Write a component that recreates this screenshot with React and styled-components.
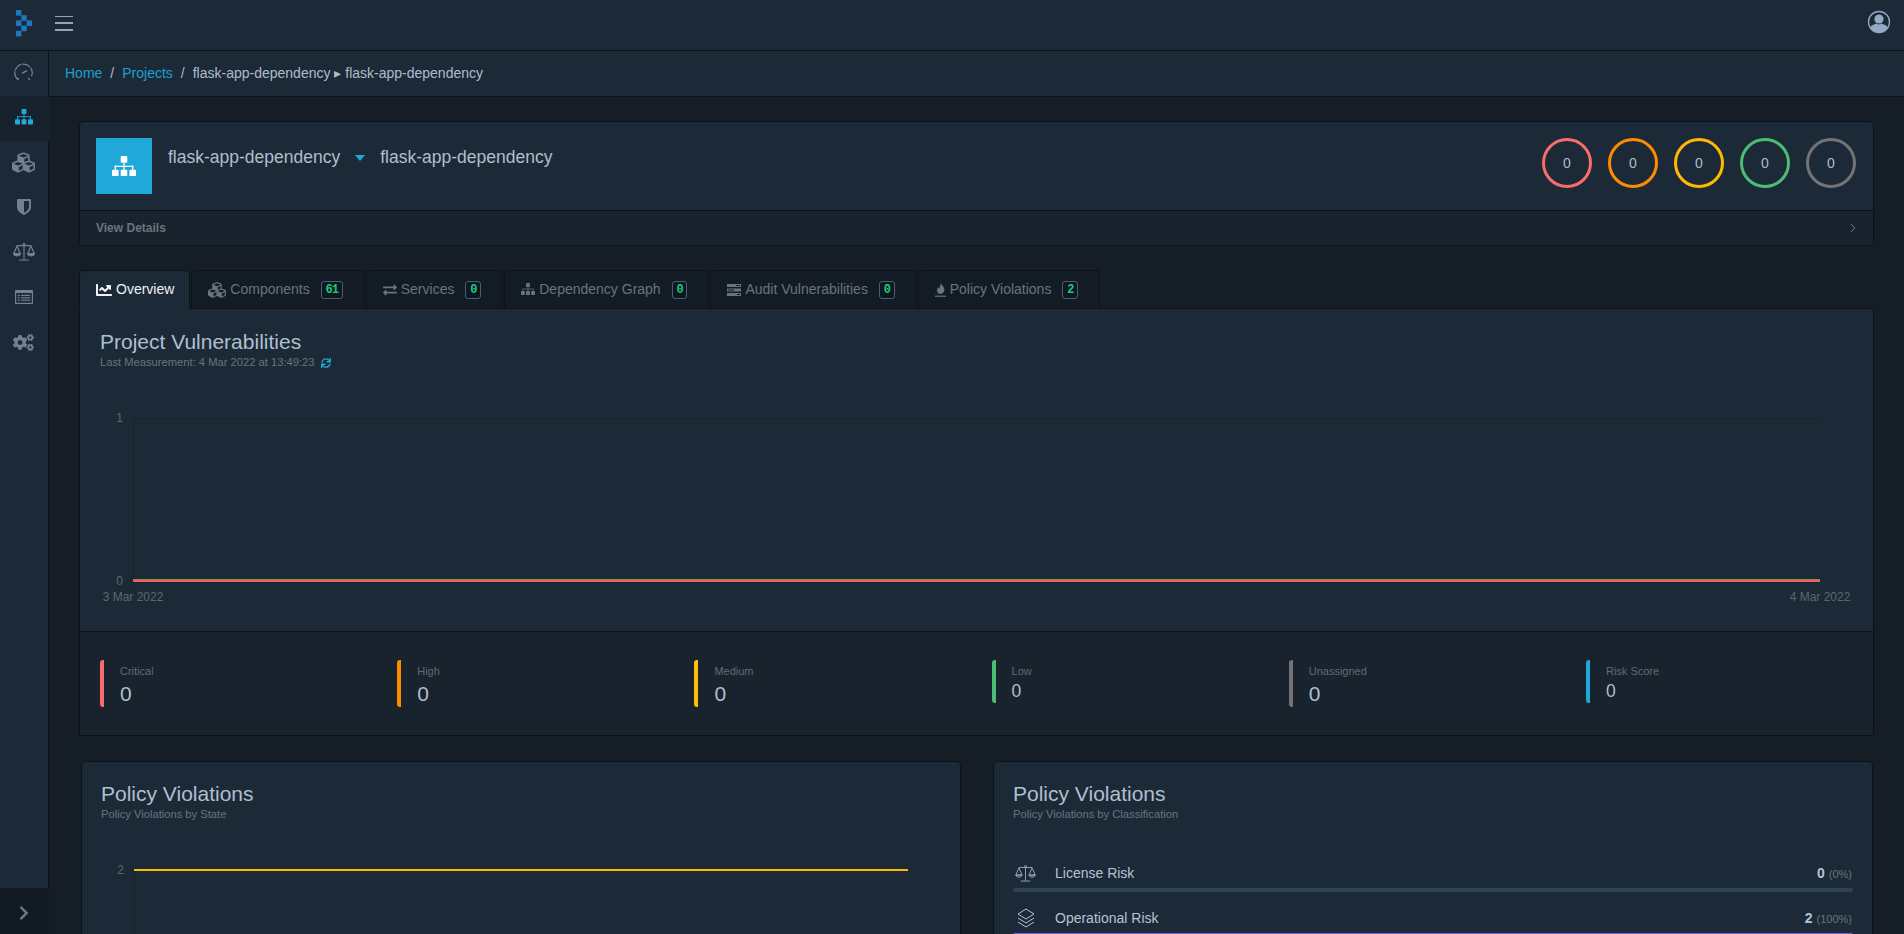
import React from 'react';
import styled, { createGlobalStyle } from 'styled-components';
import {
  FaCubes, FaCogs, FaChartLine, FaExchangeAlt, FaSync, FaChevronRight,
} from 'react-icons/fa';
import { ChevronRight } from 'lucide-react';

const GlobalStyle = createGlobalStyle`
html, body {
  margin: 0;
  height: 100%;
  overflow: hidden;
  background: #151e27;
  color: #b0bfce;
  font-family: "Liberation Sans", Arial, sans-serif;
  font-size: 14px;
  line-height: 1.5;
}
* {
  box-sizing: border-box;
}
`;

const Page = styled.div`
display: flex;
flex-direction: column;
height: 100vh;
overflow: hidden;
`;
const Header = styled.header`
flex: 0 0 51px;
display: flex;
align-items: center;
justify-content: space-between;
background: #1c2a37;
border-bottom: 1px solid #0c1218;
padding: 0 13px 4px 16px;
`;
const HeaderLeft = styled.div`
display: flex;
align-items: center;
gap: 23px;
`;
const Burger = styled.div`
width: 18px;
height: 15px;
display: flex;
flex-direction: column;
justify-content: space-between;
& > span {
  display: block;
  height: 1.5px;
  background: #93a5b8;
}
`;
const AvatarBox = styled.div`
display: flex;
margin-bottom: 2px;
`;
const Body = styled.div`
flex: 1;
display: flex;
min-height: 0;
`;
const Sidebar = styled.nav`
flex: 0 0 49px;
display: flex;
flex-direction: column;
`;
const SideList = styled.div`
flex: 1;
background: #1c2a37;
border-right: 1px solid #0c1218;
`;
const SideItem = styled.div`
height: 45px;
display: flex;
align-items: center;
justify-content: center;
padding: 0 1px 3px 0;
color: ${p => (p.$active ? '#20a8d8' : '#73818f')};
background: ${p => (p.$active ? '#18222d' : 'transparent')};
margin-right: ${p => (p.$active ? '-1px' : '0')};
`;
const Minimizer = styled.div`
flex: 0 0 46px;
display: flex;
align-items: center;
justify-content: center;
padding: 4px 2px 0 0;
color: #6a7681;
background: #121a22;
`;
const Main = styled.main`
flex: 1;
min-width: 0;
display: flex;
flex-direction: column;
`;
const Breadcrumb = styled.ol`
flex: 0 0 46px;
margin: 0;
padding: 0 16px;
list-style: none;
display: flex;
align-items: center;
gap: 8px;
background: #1c2a37;
border-bottom: 1px solid #0c1218;
`;
const Crumb = styled.li`
color: #aebccb;
`;
const CrumbLink = styled.li`
color: #1f9ed0;
`;
const Content = styled.div`
flex: 1;
min-height: 0;
overflow: hidden;
padding: 24px 30px 0;
`;
const ProjectCard = styled.section`
border: 1px solid #0c1218;
border-radius: 4px;
background: #1c2a37;
`;
const ProjectTop = styled.div`
height: 88px;
padding: 16px;
display: flex;
justify-content: space-between;
`;
const ProjectIdent = styled.div`
display: flex;
gap: 16px;
`;
const ProjectIcon = styled.div`
width: 56px;
height: 56px;
display: flex;
align-items: center;
justify-content: center;
color: #fff;
background: #20a8d8;
`;
const ProjectName = styled.div`
display: flex;
align-items: center;
height: 38px;
font-size: 17.5px;
color: #b0bfce;
`;
const Caret = styled.span`
margin: 2px 15px 0 15px;
width: 0;
height: 0;
border-left: 5.5px solid transparent;
border-right: 5.5px solid transparent;
border-top: 6px solid #20a8d8;
`;
const Rings = styled.div`
display: flex;
gap: 16px;
padding-right: 1px;
`;
const Ring = styled.div`
width: 50px;
height: 50px;
border-radius: 50%;
border: 3px solid ${p => p.$color};
display: flex;
align-items: center;
justify-content: center;
color: #aebccb;
`;
const ProjectFoot = styled.div`
height: 35px;
padding: 0 13px 0 16px;
display: flex;
align-items: center;
justify-content: space-between;
font-size: 12px;
font-weight: 700;
color: #68747f;
background: #18232e;
border-top: 1px solid #0c1218;
border-radius: 0 0 4px 4px;
`;
const FootChevron = styled.span`
display: flex;
color: #84909c;
`;
const Tabs = styled.div`
display: flex;
gap: 1px;
margin-top: 24px;
margin-bottom: -1px;
position: relative;
`;
const Tab = styled.div`
height: 39px;
padding: 0 ${p => (p.$badge ? '21px' : '15px')} 0 16px;
display: flex;
align-items: center;
gap: 4px;
border: 1px solid #0c1218;
border-bottom-color: ${p => (p.$active ? '#1c2a37' : '#0c1218')};
border-radius: 4px 4px 0 0;
background: ${p => (p.$active ? '#1c2a37' : '#131c25')};
color: ${p => (p.$active ? '#eef3f8' : '#68747f')};
`;
const Badge = styled.span`
height: 18px;
margin-left: 7px;
padding: 0 3.8px;
display: flex;
align-items: center;
justify-content: center;
font-family: "Liberation Mono", monospace;
font-size: 12px;
letter-spacing: -1px;
font-weight: 700;
color: #1fc878;
background: #0e1820;
border: 1px solid #4c5e70;
border-radius: 3px;
`;
const Panel = styled.section`
border: 1px solid #0c1218;
background: #1c2a37;
`;
const PanelHead = styled.div`
padding: 20px 20px 0;
`;
const Title = styled.h4`
margin: 0;
font-size: 21px;
font-weight: 400;
line-height: 25px;
color: #aebfd0;
`;
const Sub = styled.div`
display: flex;
align-items: center;
gap: 6px;
margin-top: 2px;
font-size: 11.2px;
line-height: 13px;
color: #68747f;
`;
const Refresh = styled.span`
display: flex;
color: #20a8d8;
`;
const Chart = styled.svg`
display: block;
`;
const AxisText = styled.text`
font-size: 12px;
fill: #5d6670;
`;
const Stats = styled.div`
height: 104px;
padding: 28px 0 0 20px;
display: grid;
grid-template-columns: repeat(6, 297.2px);
background: #18232e;
border-top: 1px solid #0c1218;
overflow: hidden;
`;
const Stat = styled.div`
height: ${p => (p.$small ? '43px' : '47px')};
padding-left: 16px;
border-left: 4px solid ${p => p.$color};
border-radius: 3px 0 0 3px;
`;
const StatLabel = styled.div`
margin-top: 4px;
font-size: 11px;
line-height: 14px;
color: #5f6b77;
`;
const StatValue = styled.div`
margin-top: 3px;
font-size: ${p => (p.$small ? '17.5px' : '21px')};
line-height: ${p => (p.$small ? '21px' : '25px')};
color: #aebfd0;
`;
const Cards = styled.div`
display: grid;
grid-template-columns: 880px 880px;
gap: 32px;
margin-top: 25px;
padding-left: 2px;
`;
const Card = styled.section`
height: 400px;
padding: 19px 19px 0;
border: 1px solid #0c1218;
border-radius: 4px;
background: #1c2a37;
`;
const RiskList = styled.div`
display: flex;
flex-direction: column;
margin-top: 37px;
`;
const Risk = styled.div`
height: 45px;
`;
const RiskHead = styled.div`
height: 30px;
padding-right: 1px;
display: flex;
align-items: center;
justify-content: space-between;
`;
const RiskName = styled.div`
display: flex;
align-items: center;
gap: 17px;
color: #b4c4d4;
`;
const RiskIconBox = styled.span`
width: 25px;
display: flex;
justify-content: center;
color: #b4c4d4;
`;
const RiskCount = styled.div`
font-weight: 700;
color: #b4c4d4;
`;
const RiskPct = styled.small`
font-size: 11px;
font-weight: 400;
color: #68747f;
margin-left: 4px;
`;
const Progress = styled.div`
height: 4px;
border-radius: 2px;
background: #2f4358;
`;
const ProgressBar = styled.div`
height: 100%;
border-radius: 2px;
background: #6f5fdc;
`;

function Logo() {
  const squares = [[0, 0], [1, 1], [0, 2], [2, 2], [1, 3], [0, 4]];
  return (
    <svg width="16" height="27" viewBox="0 0 16 27" fill="#1e78c0">
      {squares.map(([c, r]) => (
        <rect key={`${c}-${r}`} x={c * 5.33} y={r * 5.2} width="5.4" height="5.6" />
      ))}
    </svg>
  );
}

function Avatar() {
  return (
    <svg width="24" height="24" viewBox="0 0 24 24">
      <circle cx="12" cy="12" r="10.5" fill="none" stroke="#93aac2" strokeWidth="1.3" />
      <circle cx="12" cy="9" r="4.6" fill="#93aac2" />
      <path d="M3.2 17.5 C4.5 14.6 8 14.2 9.5 13.4 C11 14.6 13 14.6 14.5 13.4 C16 14.2 19.5 14.6 20.8 17.5 C18.5 21 15.5 22.4 12 22.4 C8.5 22.4 5.5 21 3.2 17.5Z" fill="#93aac2" />
    </svg>
  );
}

// the sitemap in the old font-awesome proportions, taller than the one in react-icons
function Sitemap({ width }) {
  return (
    <svg width={width} height={width * 0.86} viewBox="0 0 24 20.6" fill="currentColor">
      <rect x="8.7" y="0" width="6.6" height="6.8" rx="1" />
      <rect x="0" y="13.8" width="6.6" height="6.8" rx="1" />
      <rect x="8.7" y="13.8" width="6.6" height="6.8" rx="1" />
      <rect x="17.4" y="13.8" width="6.6" height="6.8" rx="1" />
      <rect x="11.4" y="6.5" width="1.2" height="7.5" />
      <rect x="2.7" y="9.7" width="18.6" height="1.2" />
      <rect x="2.7" y="9.7" width="1.2" height="4.3" />
      <rect x="20.1" y="9.7" width="1.2" height="4.3" />
    </svg>
  );
}

function Speedometer() {
  return (
    <svg width="19" height="18" viewBox="0 0 19 18" fill="none" stroke="currentColor" strokeWidth="1.2">
      <path d="M4 16.5 A8.7 8.7 0 1 1 15 16.5" strokeDasharray="9 .8 9 .8 9 .8 9" />
      <path d="M8 10.4 L13 7.6" strokeWidth="1.6" />
      <path d="M3 16.8 L5 15.2 M16 16.8 L14 15.2" />
    </svg>
  );
}

function Shield() {
  return (
    <svg width="14" height="16" viewBox="0 0 14 16" fill="currentColor" fillRule="evenodd">
      <path d="M0 1 Q0 0 1 0 H13 Q14 0 14 1 V8 C14 12 10 14.5 7 16 C4 14.5 0 12 0 8Z M7 2 V13.8 C9.5 12.4 12 10.6 12 8 V2Z" />
    </svg>
  );
}

function Scales({ width = 22, height = 18, weight = 1.2 }) {
  return (
    <svg width={width} height={height} viewBox="0 0 22 18" fill="none" stroke="currentColor" strokeWidth={weight}>
      <circle cx="11" cy="1.6" r="1" />
      <path d="M11 2.5 V16.5 M6 17 H16 M4 2.6 H18" />
      <path d="M4 3 L0.8 10.5 H7.2Z M18 3 L14.8 10.5 H21.2Z" />
      <path d="M0.6 10.8 C1.5 13.6 6.5 13.6 7.4 10.8Z M14.6 10.8 C15.5 13.6 20.5 13.6 21.4 10.8Z" fill={weight > 1 ? 'currentColor' : 'none'} />
    </svg>
  );
}

function ListAlt() {
  return (
    <svg width="18" height="14" viewBox="0 0 18 14" fill="currentColor" fillRule="evenodd">
      <path d="M1 0 H17 Q18 0 18 1 V13 Q18 14 17 14 H1 Q0 14 0 13 V1 Q0 0 1 0Z M1.2 3 V12.8 H16.8 V3Z" />
      <rect x="2.8" y="4.8" width="2" height="1.2" />
      <rect x="2.8" y="7.2" width="2" height="1.2" />
      <rect x="2.8" y="9.6" width="2" height="1.2" />
      <rect x="6" y="4.8" width="9.2" height="1.2" />
      <rect x="6" y="7.2" width="9.2" height="1.2" />
      <rect x="6" y="9.6" width="9.2" height="1.2" />
    </svg>
  );
}

function Tasks() {
  return (
    <svg width="14" height="12" viewBox="0 0 14 12" fill="currentColor">
      <rect y="0" width="14" height="3" />
      <rect y="4.5" width="14" height="3" />
      <rect y="9" width="14" height="3" />
      <rect x="9" y="1" width="4" height="1" fill="#131c25" />
      <rect x="1" y="5.5" width="6" height="1" fill="#131c25" />
      <rect x="10" y="10" width="3" height="1" fill="#131c25" />
    </svg>
  );
}

function Flame() {
  return (
    <svg width="11" height="14" viewBox="0 0 11 14" fill="currentColor">
      <path d="M5.8 0 C6.4 2 9.4 3.6 9.4 6.6 C9.4 9 7.6 11 5.6 11 C3.4 11 2 9.2 2 7.2 C2 5.8 2.8 4.8 3.4 4.2 C3.4 5 3.7 5.6 4.2 5.8 C4.6 3.8 5.6 2.4 5.8 0Z" />
      <rect x="0" y="12.6" width="11" height="1.2" />
    </svg>
  );
}

function Layers() {
  return (
    <svg width="20" height="20" viewBox="0 0 20 20" fill="none" stroke="currentColor" strokeWidth="1">
      <path d="M10 1 L18 6 L10 11 L2 6Z" />
      <path d="M2 10 L10 15 L18 10" />
      <path d="M2 14 L10 19 L18 14" />
    </svg>
  );
}

const rings = ['#f86c6b', '#ff8c00', '#ffb900', '#4dbd74', '#737373'];

const stats = [
  { label: 'Critical', color: '#f86c6b' },
  { label: 'High', color: '#ff8c00' },
  { label: 'Medium', color: '#ffc107' },
  { label: 'Low', color: '#4dbd74', small: true },
  { label: 'Unassigned', color: '#737373' },
  { label: 'Risk Score', color: '#20a8d8', small: true },
];

const tabs = [
  { name: 'Overview', icon: <FaChartLine size={16} />, active: true },
  { name: 'Components', icon: <FaCubes size={18} />, badge: 61 },
  { name: 'Services', icon: <FaExchangeAlt size={14} />, badge: 0 },
  { name: 'Dependency Graph', icon: <Sitemap width={14} />, badge: 0 },
  { name: 'Audit Vulnerabilities', icon: <Tasks />, badge: 0 },
  { name: 'Policy Violations', icon: <Flame />, badge: 2 },
];

export default function App() {
  return (
    <Page>
      <GlobalStyle />
      <Header>
        <HeaderLeft>
          <Logo />
          <Burger><span /><span /><span /></Burger>
        </HeaderLeft>
        <AvatarBox><Avatar /></AvatarBox>
      </Header>
      <Body>
        <Sidebar>
          <SideList>
            <SideItem><Speedometer /></SideItem>
            <SideItem $active><Sitemap width={18} /></SideItem>
            <SideItem><FaCubes size={23} /></SideItem>
            <SideItem><Shield /></SideItem>
            <SideItem><Scales /></SideItem>
            <SideItem><ListAlt /></SideItem>
            <SideItem><FaCogs size={21} /></SideItem>
          </SideList>
          <Minimizer><FaChevronRight size={16} /></Minimizer>
        </Sidebar>
        <Main>
          <Breadcrumb>
            <CrumbLink>Home</CrumbLink>
            <Crumb>/</Crumb>
            <CrumbLink>Projects</CrumbLink>
            <Crumb>/</Crumb>
            <Crumb>flask-app-dependency ▸ flask-app-dependency</Crumb>
          </Breadcrumb>
          <Content>
            <ProjectCard>
              <ProjectTop>
                <ProjectIdent>
                  <ProjectIcon><Sitemap width={24} /></ProjectIcon>
                  <ProjectName>
                    flask-app-dependency
                    <Caret />
                    flask-app-dependency
                  </ProjectName>
                </ProjectIdent>
                <Rings>
                  {rings.map(color => <Ring key={color} $color={color}>0</Ring>)}
                </Rings>
              </ProjectTop>
              <ProjectFoot>
                View Details
                <FootChevron><ChevronRight size={14} strokeWidth={1.5} /></FootChevron>
              </ProjectFoot>
            </ProjectCard>

            <Tabs>
              {tabs.map(t => (
                <Tab key={t.name} $active={t.active} $badge={t.badge !== undefined}>
                  {t.icon}
                  {t.name}
                  {t.badge !== undefined && <Badge>{t.badge}</Badge>}
                </Tab>
              ))}
            </Tabs>
            <Panel>
              <PanelHead>
                <Title>Project Vulnerabilities</Title>
                <Sub>
                  Last Measurement: 4 Mar 2022 at 13:49:23
                  <Refresh><FaSync size={10} /></Refresh>
                </Sub>
              </PanelHead>
              <Chart width="1792" height="262" viewBox="0 0 1792 262">
                <path d="M53 49.5 H1740 M53.5 49 V221 M47 212 H53" stroke="#18232e" fill="none" />
                <AxisText x="43" y="53" textAnchor="end">1</AxisText>
                <AxisText x="43" y="216" textAnchor="end">0</AxisText>
                <AxisText x="53" y="232" textAnchor="middle">3 Mar 2022</AxisText>
                <AxisText x="1740" y="232" textAnchor="middle">4 Mar 2022</AxisText>
                <rect x="53" y="210" width="1687" height="1" fill="#8a8a50" />
                <rect x="53" y="211" width="1687" height="2" fill="#f0625f" />
              </Chart>
              <Stats>
                {stats.map(s => (
                  <Stat key={s.label} $color={s.color} $small={s.small}>
                    <StatLabel>{s.label}</StatLabel>
                    <StatValue $small={s.small}>0</StatValue>
                  </Stat>
                ))}
              </Stats>
            </Panel>

            <Cards>
              <Card>
                <Title>Policy Violations</Title>
                <Sub>Policy Violations by State</Sub>
                <Chart width="840" height="200" viewBox="0 0 840 200">
                  <path d="M33.5 49 V200 M27 49.5 H33" stroke="#18232e" fill="none" />
                  <AxisText x="23" y="53" textAnchor="end">2</AxisText>
                  <rect x="33" y="48" width="774" height="2" fill="#ffb900" />
                </Chart>
              </Card>
              <Card>
                <Title>Policy Violations</Title>
                <Sub>Policy Violations by Classification</Sub>
                <RiskList>
                  <Risk>
                    <RiskHead>
                      <RiskName>
                        <RiskIconBox><Scales width={21} height={17} weight={0.8} /></RiskIconBox>
                        License Risk
                      </RiskName>
                      <RiskCount>0<RiskPct>(0%)</RiskPct></RiskCount>
                    </RiskHead>
                    <Progress />
                  </Risk>
                  <Risk>
                    <RiskHead>
                      <RiskName>
                        <RiskIconBox><Layers /></RiskIconBox>
                        Operational Risk
                      </RiskName>
                      <RiskCount>2<RiskPct>(100%)</RiskPct></RiskCount>
                    </RiskHead>
                    <Progress><ProgressBar style={{ width: '100%' }} /></Progress>
                  </Risk>
                </RiskList>
              </Card>
            </Cards>
          </Content>
        </Main>
      </Body>
    </Page>
  );
}
